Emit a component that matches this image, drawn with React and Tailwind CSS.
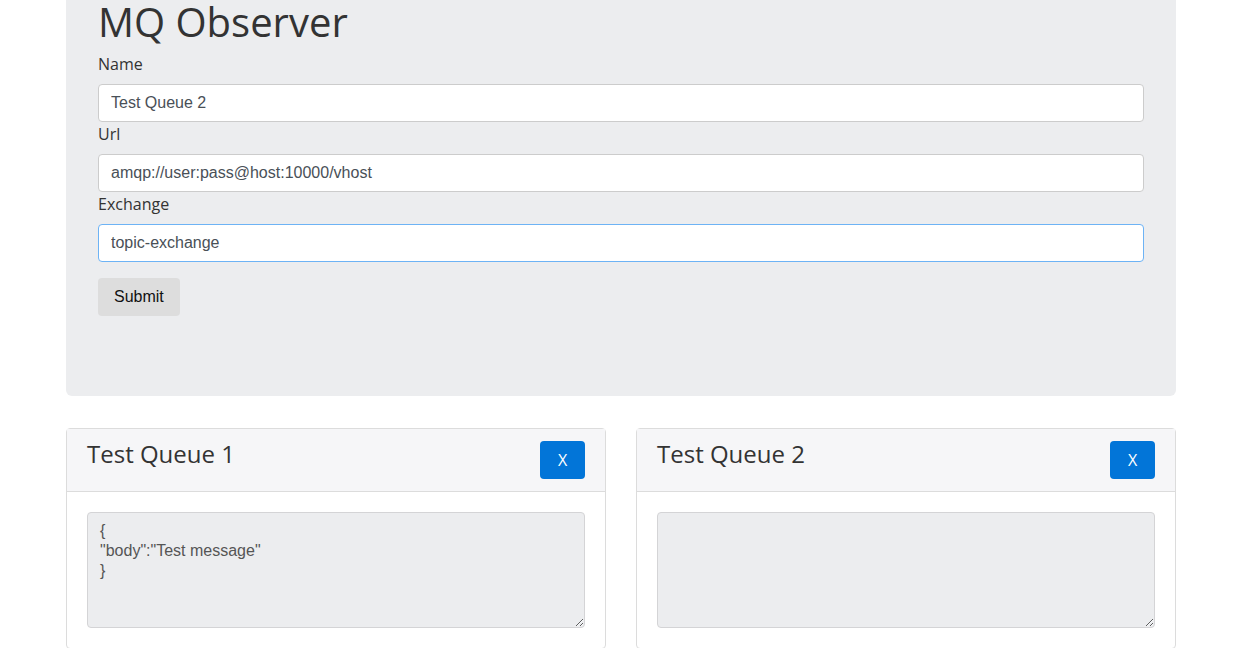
import React from 'react';

const sans = { fontFamily: '"Open Sans", sans-serif' };

function Field({ label, value, focused }) {
    return (
        <div>
            <label className="block mb-2 text-base leading-6 text-[#333]">{label}</label>
            <input
                readOnly
                value={value}
                className={
                    'block w-full h-[38px] px-3 rounded bg-white text-base text-[#495057] font-["Liberation_Sans",Arial,sans-serif] outline-none border ' +
                    (focused ? 'border-[#6db3f5]' : 'border-[#cccccc]')
                }
            />
        </div>
    );
}

function QueueCard({ title, body }) {
    return (
        <div className="border border-[#dcdcdc] rounded bg-white">
            <div className="flex items-start justify-between px-5 py-3 bg-[#f6f6f8] border-b border-[#dcdcdc]">
                <h4 className="text-2xl leading-[1.2] -mt-[1px] text-[#333]">{title}</h4>
                <button className="w-[45px] h-[38px] rounded bg-[#0275d8] text-white text-base font-['Open_Sans',sans-serif]">
                    X
                </button>
            </div>
            <div className="p-5">
                <textarea
                    readOnly
                    value={body}
                    className="block w-full h-[116px] px-3 py-2 rounded border border-[#d4d4d6] bg-[#ecedef] text-base leading-5 text-[#555] font-['Liberation_Sans',Arial,sans-serif] outline-none resize-y"
                />
            </div>
        </div>
    );
}

export default function App() {
    return (
        <div className="bg-white min-h-screen overflow-hidden" style={sans}>
            <div className="w-[1110px] ml-[66px] -mt-[36px]">
                <div className="bg-[#ecedef] rounded-md px-8 pt-8 pb-[80px] mb-8">
                    <h1 className="text-[40px] leading-[1.2] mt-[2px] mb-[6px] text-[#333]">MQ Observer</h1>
                    <Field label="Name" value="Test Queue 2" />
                    <Field label="Url" value="amqp://user:pass@host:10000/vhost" />
                    <Field label="Exchange" value="topic-exchange" focused />
                    <button className="mt-4 h-[38px] px-4 rounded bg-[#dddddd] text-base text-[#111] font-['Liberation_Sans',Arial,sans-serif]">
                        Submit
                    </button>
                </div>
                <div className="grid grid-cols-2 gap-[30px]">
                    <QueueCard title="Test Queue 1" body={'{\n"body":"Test message"\n}'} />
                    <QueueCard title="Test Queue 2" body="" />
                </div>
            </div>
        </div>
    );
}
